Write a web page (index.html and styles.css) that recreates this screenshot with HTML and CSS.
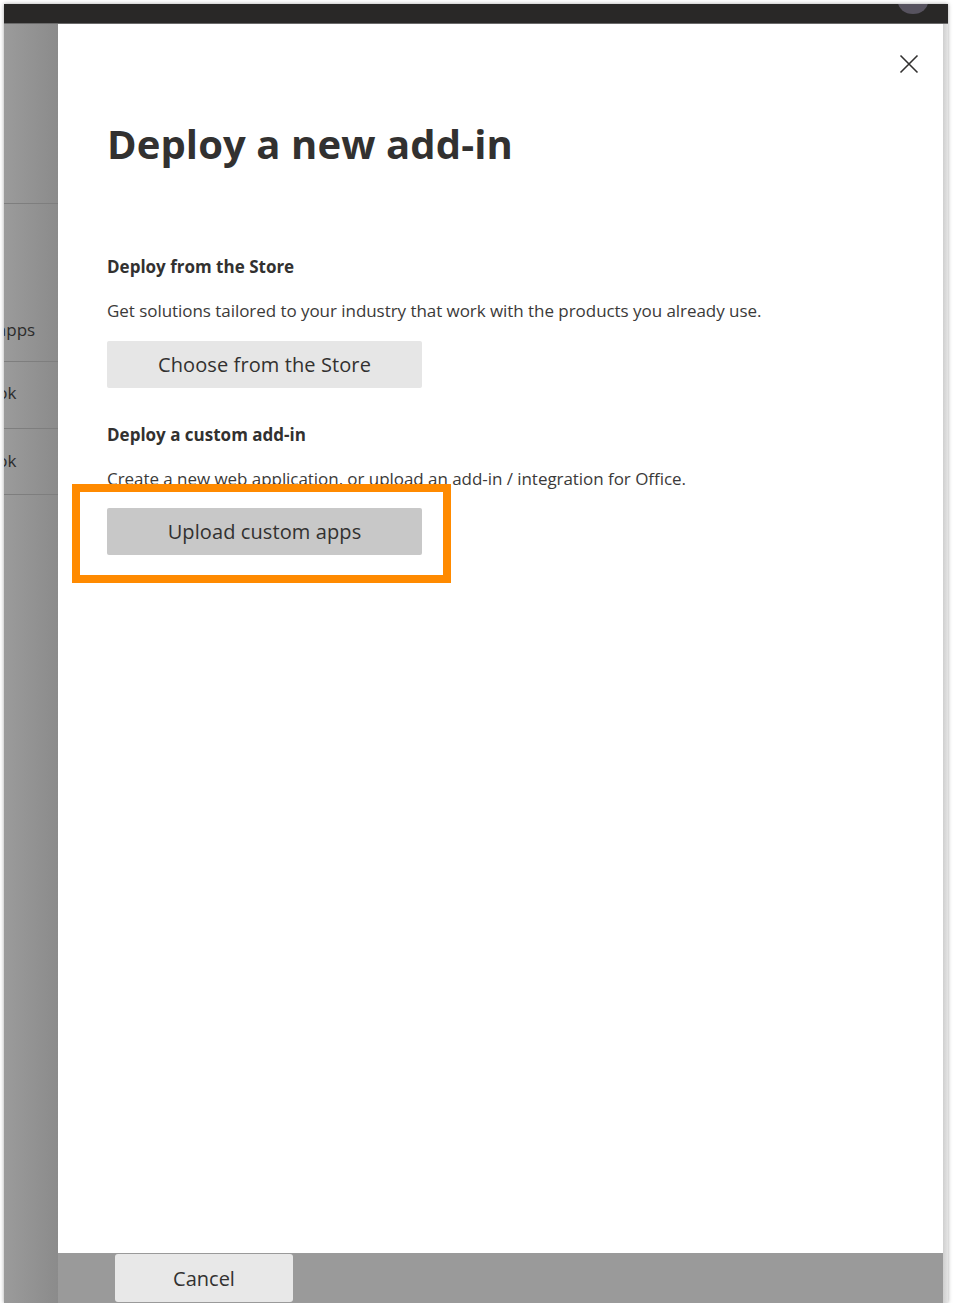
FILE: index.html
```html
<!DOCTYPE html>
<html lang="en">

<head>
    <meta charset="UTF-8">
    <meta name="viewport" content="width=device-width, initial-scale=1.0">
    <title>Deploy a new add-in</title>
    <link rel="stylesheet" href="styles.css">
</head>

<body>
    <div class="frame">
        <div class="topbar">
            <div class="avatar"></div>
        </div>
        <div class="workspace">
            <div class="side-nav">
                <div class="nav-item nav-top"></div>
                <div class="nav-item nav-apps">Integrated apps</div>
                <div class="nav-item nav-outlook">Outlook</div>
                <div class="nav-item nav-outlook">Outlook</div>
            </div>
            <div class="panel">
                <div class="panel-body">
                    <div class="panel-close">
                        <button class="close-btn" aria-label="Close">
                            <svg width="20" height="20" viewBox="0 0 20 20">
                                <path d="M1.5 1.5 L18.5 18.5 M18.5 1.5 L1.5 18.5" stroke="#323130" stroke-width="1.6" fill="none" />
                            </svg>
                        </button>
                    </div>
                    <h1 class="panel-title">Deploy a new add-in</h1>

                    <div class="section">
                        <h2>Deploy from the Store</h2>
                        <p>Get solutions tailored to your industry that work with the products you already use.</p>
                        <button class="action-btn">Choose from the Store</button>
                    </div>

                    <div class="section section-custom">
                        <h2>Deploy a custom add-in</h2>
                        <p>Create a new web application, or upload an add-in / integration for Office.</p>
                        <button class="action-btn action-btn-active">Upload custom apps</button>
                        <!-- highlight box from the docs screenshot -->
                        <div class="highlight"></div>
                    </div>
                </div>
                <div class="panel-footer">
                    <button class="cancel-btn">Cancel</button>
                </div>
            </div>
            <div class="edge"></div>
        </div>
    </div>
</body>

</html>
```

FILE: styles.css
```css
body {
    margin: 0;
    background-color: #ffffff;
    font-family: 'Open Sans', 'Noto Sans', sans-serif;
    color: #323130;
}

.frame {
    margin: 4px 0 0 4px;
    width: 944px;
    height: 1299px;
    display: flex;
    flex-direction: column;
    box-shadow: 0 0 4px rgba(0, 0, 0, 0.35);
}

.topbar {
    height: 19px;
    background-color: #292827;
    border-bottom: 1px solid #6a6a6a;
    position: relative;
    overflow: hidden;
}

.avatar {
    position: absolute;
    right: 20px;
    top: -14px;
    width: 30px;
    height: 24px;
    border-radius: 50%;
    background-color: #57535f;
}

.workspace {
    flex: 1;
    display: flex;
}

.side-nav {
    width: 54px;
    background: linear-gradient(to right, #9b9b9b, #8b8b8b);
    overflow: hidden;
}

.nav-item {
    height: 66px;
    box-sizing: border-box;
    border-bottom: 1px solid #7e7e7e;
    padding-left: 8px;
    display: flex;
    align-items: center;
    font-size: 17px;
    color: #2c2c2c;
    white-space: nowrap;
}

.nav-top {
    height: 180px;
}

.nav-apps {
    height: 158px;
    padding-top: 93px;
    margin-left: -102px;
}

.nav-outlook {
    height: 67px;
    padding-bottom: 5px;
    margin-left: -59px;
}

.nav-outlook:last-child {
    height: 66px;
    padding-bottom: 2px;
}

.panel {
    flex: 1;
    display: flex;
    flex-direction: column;
    background-color: #ffffff;
}

.panel-body {
    flex: 1;
    padding: 0 49px;
}

.panel-close {
    display: flex;
    justify-content: flex-end;
    padding-top: 30px;
    margin-right: -25px;
}

.close-btn {
    background: none;
    border: none;
    padding: 0;
    width: 20px;
    height: 20px;
    cursor: pointer;
}

.panel-title {
    margin: 43px 0 0 0;
    font-size: 40px;
    line-height: 54px;
    font-weight: 700;
    letter-spacing: 0.1px;
}

.section {
    position: relative;
    margin-top: 84px;
}

.section h2 {
    margin: 0;
    font-size: 17px;
    line-height: 24px;
    font-weight: 700;
}

.section p {
    margin: 21px 0 0 0;
    font-size: 17px;
    line-height: 22px;
    color: #3b3a39;
    letter-spacing: -0.05px;
}

.action-btn {
    display: block;
    margin-top: 19px;
    width: 315px;
    height: 47px;
    border: none;
    border-radius: 2px;
    background-color: #e6e6e6;
    font-family: inherit;
    font-size: 20px;
    color: #323130;
    letter-spacing: 0.1px;
    cursor: pointer;
}

.action-btn-active {
    background-color: #c8c8c8;
    margin-top: 18px;
}

.section-custom {
    margin-top: 35px;
}

.highlight {
    position: absolute;
    left: -35px;
    top: 61px;
    width: 363px;
    height: 83px;
    border: 8px solid #ff8a00;
}

.panel-footer {
    height: 50px;
    background-color: #9a9a9a;
    padding-left: 57px;
}

.cancel-btn {
    width: 178px;
    height: 48px;
    margin-top: 1px;
    border: none;
    border-radius: 3px;
    background-color: #e8e8e8;
    font-family: inherit;
    font-size: 20px;
    color: #323130;
    cursor: pointer;
}

.edge {
    width: 5px;
    background: linear-gradient(to right, #cfcfcf, #e4e4e4);
}
```
